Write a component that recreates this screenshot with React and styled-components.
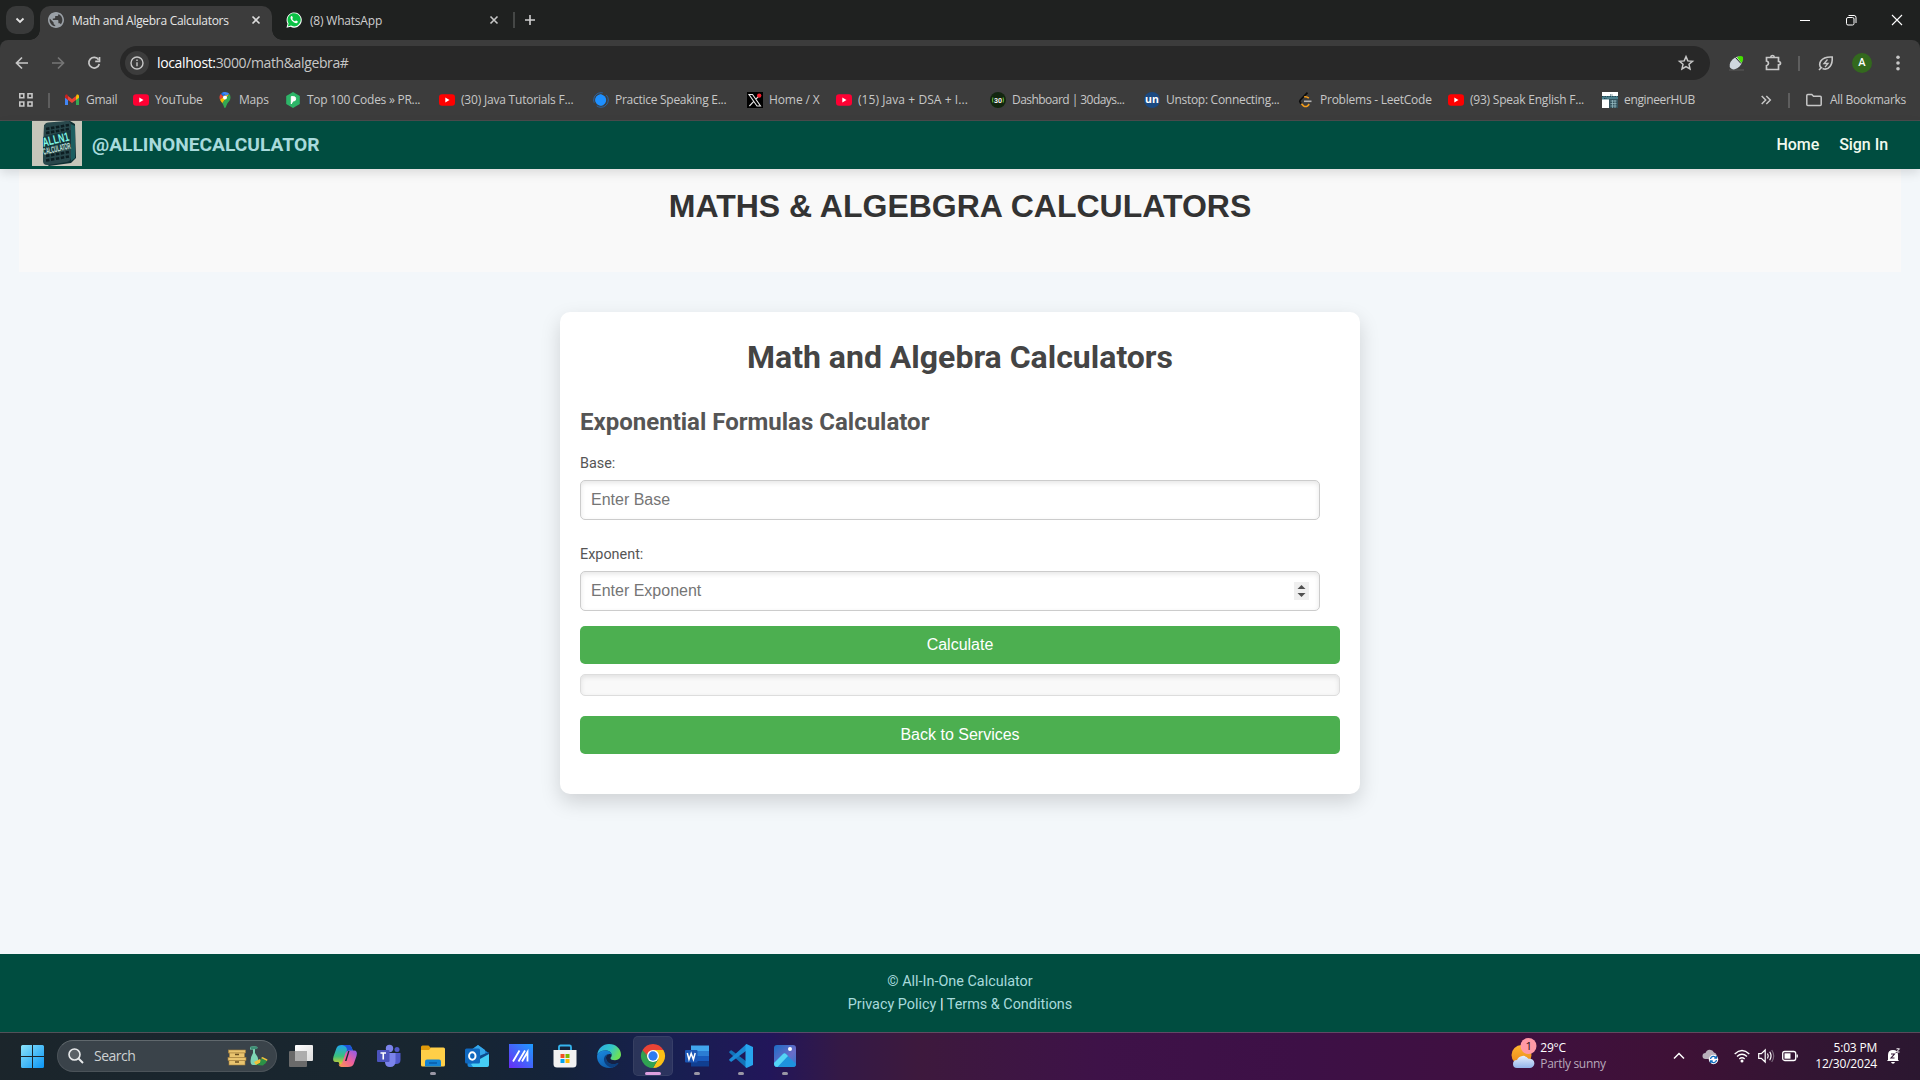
import React from "react";
import styled, { createGlobalStyle } from "styled-components";

const GlobalStyle = createGlobalStyle`
  * { box-sizing: border-box; }
  html, body { margin: 0; padding: 0; overflow: hidden; }
  body { width: 1920px; height: 1080px; background: #f3f7fa; }
  svg { display: block; flex: none; overflow: visible; }
`;

const ui = `"Open Sans", "Noto Sans", sans-serif`;

const Screen = styled.div`
  width: 1920px;
  height: 1080px;
  display: flex;
  flex-direction: column;
  overflow: hidden;
`;

/* ---------- browser chrome ---------- */

const TabStrip = styled.div`
  height: 40px;
  flex: none;
  background: #1f2120;
  display: flex;
  align-items: flex-start;
  padding: 6px 0 0 6px;
  font-family: ${ui};
`;

const TabSearch = styled.div`
  width: 28px;
  height: 28px;
  border-radius: 10px;
  background: #393a3a;
  display: grid;
  place-items: center;
  margin-right: 6px;
`;

const Tab = styled.div`
  position: relative;
  width: ${(p) => p.$w}px;
  height: 34px;
  padding: 0 0 6px ${(p) => p.$pad}px;
  display: flex;
  align-items: center;
  border-radius: 10px 10px 0 0;
  background: ${(p) => (p.$active ? "#3c3c3c" : "transparent")};
  color: ${(p) => (p.$active ? "#e6e6e6" : "#cfcfcf")};
  ${(p) =>
    p.$active &&
    `
    &::before, &::after {
      content: "";
      position: absolute;
      bottom: 0;
      width: 10px;
      height: 10px;
    }
    &::before { left: -10px; background: radial-gradient(circle at 0 0, transparent 9.5px, #3c3c3c 10px); }
    &::after { right: -10px; background: radial-gradient(circle at 100% 0, transparent 9.5px, #3c3c3c 10px); }
  `}
`;

const Label = styled.span`
  font-size: ${(p) => p.$size || 12}px;
  letter-spacing: ${(p) => p.$track || 0}px;
  line-height: 16px;
  white-space: nowrap;
`;

const TabTitle = styled(Label)`
  width: ${(p) => p.$w}px;
  margin-left: 8px;
  padding-top: 2px;
`;

const StripDivider = styled.div`
  width: 2px;
  height: 16px;
  margin: 6px 10px 0 3px;
  background: #454746;
`;

const NewTab = styled.div`
  padding-top: 9px;
`;

const WindowControls = styled.div`
  margin-left: auto;
  display: flex;
  padding: 8px 17px 0 0;
  gap: 34px;
`;

const Toolbar = styled.div`
  height: 46px;
  flex: none;
  background: #1f2120;
`;

const ToolbarInner = styled.div`
  height: 100%;
  display: flex;
  align-items: center;
  background: #3c3c3c;
  border-radius: 8px 8px 0 0;
  padding-left: 14px;
  font-family: ${ui};
`;

const NavIcon = styled.div`
  width: 16px;
  margin-right: 20px;
`;

const Omnibox = styled.div`
  width: 1590px;
  height: 34px;
  margin-left: -2px;
  border-radius: 17px;
  background: #282828;
  display: flex;
  align-items: center;
  padding: 0 16px 0 5px;
`;

const SiteInfo = styled.div`
  width: 24px;
  height: 24px;
  border-radius: 50%;
  background: #3c3c3c;
  display: grid;
  place-items: center;
  margin-right: 8px;
`;

const Url = styled.span`
  flex: 1;
  font-size: 14px;
  letter-spacing: ${(p) => p.$track}px;
  line-height: 20px;
  color: #c7c7c7;
  white-space: nowrap;
  b { font-weight: 400; color: #fff; }
`;

const Actions = styled.div`
  display: flex;
  align-items: center;
  margin-left: 18px;
`;

const ActionSlot = styled.div`
  width: ${(p) => p.$w}px;
  display: flex;
  align-items: center;
`;

const Bar = styled.div`
  width: 2px;
  height: 15px;
  background: #5e5e5e;
`;

const Avatar = styled.div`
  width: 20px;
  height: 20px;
  border-radius: 50%;
  background: #33691e;
  color: #fff;
  display: grid;
  place-items: center;
  font: 500 11px/20px Roboto, sans-serif;
`;

const BookmarkBar = styled.div`
  height: 35px;
  flex: none;
  background: #3c3c3c;
  border-bottom: 1px solid #4b4b4d;
  display: flex;
  align-items: center;
  padding: 0 14px 6px 18px;
  font-family: ${ui};
  color: #c7c7c7;
`;

const Bookmark = styled.div`
  width: ${(p) => p.$w}px;
  display: flex;
  align-items: center;
  gap: 6px;
`;

const BookmarkTail = styled.div`
  margin-left: auto;
  display: flex;
  align-items: center;
`;

/* ---------- site ---------- */

const SiteHeader = styled.header`
  position: relative;
  z-index: 1;
  height: 48px;
  flex: none;
  background: #004d40;
  box-shadow: 0 4px 10px rgba(0, 0, 0, 0.12);
  display: flex;
  align-items: center;
  padding: 0 32px;
  font-family: Roboto, sans-serif;
`;

const LogoBox = styled.div`
  height: 48px;
  margin-right: 10px;
`;

const Brand = styled.span`
  font-size: 19.2px;
  font-weight: 700;
  line-height: 24px;
  padding-bottom: 1px;
  color: #a8dadc;
`;

const SiteNav = styled.nav`
  margin-left: auto;
  display: flex;
  gap: 20px;
  padding-bottom: 2px;
  font-size: 16px;
  letter-spacing: -0.05px;
  font-weight: 500;
  color: #f1faee;
`;

const Main = styled.main`
  flex: 1;
  background: #f3f7fa;
  display: flex;
  flex-direction: column;
  align-items: center;
`;

const Banner = styled.section`
  width: 1882px;
  height: 103px;
  background: #f9f9f9;
  padding-top: 17px;
  text-align: center;
`;

const BannerTitle = styled.h1`
  margin: 0;
  font: 700 32px/40px "Liberation Sans", Arial, sans-serif;
  color: #333;
`;

const Card = styled.section`
  width: 800px;
  height: 482px;
  margin-top: 40px;
  padding: 26px 20px 0;
  background: #fff;
  border-radius: 10px;
  box-shadow: 0 8px 20px rgba(0, 0, 0, 0.15);
  font-family: Roboto, sans-serif;
`;

const CardTitle = styled.h1`
  margin: 0;
  font-size: 32px;
  line-height: 38px;
  text-align: center;
  color: #444;
`;

const CardSubtitle = styled.h2`
  margin: 32px 0 0;
  font-size: 24px;
  line-height: 28px;
  color: #555;
`;

const FieldLabel = styled.label`
  display: block;
  margin: ${(p) => p.$top}px 0 7px;
  font-size: 14.4px;
  line-height: 18px;
  color: #555;
`;

const Field = styled.div`
  width: 740px;
  height: 40px;
  border: 1px solid #ccc;
  border-radius: 5px;
  background: #fff;
  box-shadow: inset 0 2px 5px rgba(0, 0, 0, 0.1);
  display: flex;
  align-items: center;
  padding: 0 10px;
`;

const Input = styled.input`
  flex: 1;
  border: 0;
  padding: 0;
  margin: 0;
  outline: 0;
  background: transparent;
  font: 16px/18px "Liberation Sans", Arial, sans-serif;
  &::placeholder { color: #757575; opacity: 1; }
`;

const Spinner = styled.div`
  width: 15px;
  height: 18px;
  background: #efefef;
`;

const GreenButton = styled.button`
  display: block;
  width: 100%;
  height: 38px;
  margin: ${(p) => p.$top}px 0 0;
  border: 0;
  border-radius: 5px;
  background: #4caf50;
  color: #fff;
  font: 16px/18px "Liberation Sans", Arial, sans-serif;
`;

const ResultBox = styled.div`
  height: 22px;
  margin-top: 10px;
  border: 1px solid #ddd;
  border-radius: 5px;
  background: #f9f9f9;
  box-shadow: inset 0 2px 5px rgba(0, 0, 0, 0.1);
`;

const SiteFooter = styled.footer`
  height: 78px;
  flex: none;
  background: #004d40;
  padding-top: 16px;
  text-align: center;
  font: 14.4px/23px Roboto, sans-serif;
  color: #fff;
  span { color: #a8dadc; }
`;

/* ---------- taskbar ---------- */

const TaskBar = styled.div`
  height: 48px;
  flex: none;
  border-top: 1px solid rgba(128, 118, 128, 0.55);
  background: linear-gradient(
    90deg,
    #1b252b 0, #182630 420px, #14233a 560px, #171f50 670px,
    #22165a 770px, #341946 840px, #3d193d 920px, #3e1248 1100px, #3d1046 1300px,
    #3f1040 1500px, #3e1136 1680px, #331533 1800px, #2b1730 1920px
  );
  display: flex;
  align-items: center;
  padding: 0 20px 1px 21px;
  font-family: ${ui};
`;

const StartSlot = styled.div`
  width: 36px;
`;

const SearchPill = styled.div`
  width: 220px;
  height: 32px;
  border-radius: 16px;
  background: #3a434a;
  border: 1px solid #4b5359;
  border-top-color: #60686d;
  display: flex;
  align-items: center;
  padding: 0 8px 0 10px;
  color: #cdd1d3;
`;

const SearchText = styled(Label)`
  flex: 1;
  margin-left: 10px;
`;

const Apps = styled.div`
  display: flex;
  margin-left: 4px;
  gap: 4px;
`;

const AppSlot = styled.div`
  width: 40px;
  height: 40px;
  border-radius: 5px;
  display: flex;
  flex-direction: column;
  align-items: center;
  padding-top: 8px;
  background: ${(p) => (p.$active ? "rgba(255,255,255,0.09)" : "transparent")};
  box-shadow: ${(p) => (p.$active ? "inset 0 0 0 1px rgba(255,255,255,0.06)" : "none")};
`;

const RunMark = styled.div`
  width: ${(p) => (p.$active ? 16 : 6)}px;
  height: 3px;
  margin-top: 4px;
  border-radius: 2px;
  background: ${(p) => (p.$active ? "#de9fe0" : "#9a97a5")};
`;

const Weather = styled.div`
  margin-left: auto;
  width: 162px;
  display: flex;
  align-items: center;
  gap: 3px;
`;

const WeatherIcon = styled.div`
  padding-bottom: 5px;
`;

const Lines = styled.div`
  display: flex;
  flex-direction: column;
  align-items: ${(p) => p.$align || "flex-start"};
  color: #fff;
`;

const Dim = styled(Label)`
  color: #b9a9bb;
`;

const Tray = styled.div`
  display: flex;
  align-items: center;
`;

const TraySlot = styled.div`
  width: ${(p) => p.$w}px;
`;

/* ---------- icons ---------- */

const Svg = ({ w = 16, h, vb, children, ...r }) => (
  <svg width={w} height={h || w} viewBox={vb || `0 0 ${w} ${h || w}`} fill="none" {...r}>
    {children}
  </svg>
);

const Close = ({ c = "#dcdcdc" }) => (
  <Svg w={8} stroke={c} strokeWidth="1.6"><path d="M.5.5l7 7M7.5.5l-7 7" /></Svg>
);

const Globe = () => (
  <Svg w={16} vb="2 2 20 20">
    <path fill="#9aa0a6" d="M12 2C6.480 2 2 6.480 2 12s4.480 10 10 10 10-4.480 10-10S17.520 2 12 2zm-1 17.930c-3.950-.49-7-3.850-7-7.930 0-.62.08-1.210.21-1.790L9 15v1c0 1.100.9 2 2 2v1.930zm6.900-2.540c-.26-.81-1-1.390-1.900-1.390h-1v-3c0-.55-.45-1-1-1H8v-2h2c.55 0 1-.45 1-1V7h2c1.100 0 2-.9 2-2v-.41c2.930 1.190 5 4.060 5 7.410 0 2.080-.8 3.970-2.100 5.390z" />
  </Svg>
);

const WhatsApp = () => (
  <Svg>
    <path d="M.5 15.700l1-4A7.600 7.600 0 1 1 4.500 14.700z" fill="#fff" />
    <path d="M1.800 14.400l.8-3A6.600 6.600 0 1 1 5 13.600z" fill="#0bc144" />
    <path d="M5.200 4.300c-1.500 1.300-.2 3.700 1.600 5.300 1.800 1.500 4.100 2.400 4.900.6.2-.6 0-.8-.5-1.100l-1.200-.6c-.4-.1-.8 1-1.300.8C7.500 8.800 6.500 7.700 6.300 7c-.1-.4.7-.7.5-1.200l-.5-1.300c-.2-.5-.8-.5-1.100-.2z" fill="#fff" />
  </Svg>
);

const Gmail = () => (
  <Svg>
    <path d="M1 4v9h3V7.500z" fill="#4285f4" />
    <path d="M12 7.500V13h3V4z" fill="#34a853" />
    <path d="M12 4.500V8l3-2.300V4c0-1.300-1.500-2-2.500-1.200z" fill="#fbbc04" />
    <path d="M4 4.500V8L1 5.700V4c0-1.300 1.500-2 2.500-1.200z" fill="#c5221f" />
    <path d="M4 4v4l4 3 4-3V4L8 7z" fill="#ea4335" />
  </Svg>
);

const YouTube = ({ c = "#ff0033" }) => (
  <Svg><rect y="2.200" width="16" height="11.600" rx="3" fill={c} /><path d="M6.300 5.600v4.800L10.500 8z" fill="#fff" /></Svg>
);

const MapsPin = () => (
  <Svg>
    <path d="M8 0a5.500 5.500 0 0 0-4.200 2L7 5z" fill="#1a73e8" />
    <path d="M3.800 2A5.500 5.500 0 0 0 3 7.800L6.300 4.400z" fill="#ea4335" />
    <path d="M8 0c-1 0-2 .3-2.800.8L9.700 4l2.600-2.200A5.500 5.500 0 0 0 8 0z" fill="#4285f4" />
    <path d="M3 7.800c.5 1.200 1.500 2 2.300 3.400l7-8.900-5.600 2.200z" fill="#fbbc04" />
    <path d="M5.300 11.200C6.700 13 7 16 8 16s1.300-3 2.700-5c1.400-1.800 2.800-3 2.800-5.500 0-1.400-.4-2.600-1.200-3.500z" fill="#34a853" />
    <circle cx="8" cy="5.400" r="2" fill="#fff" />
  </Svg>
);

const PrepHex = () => (
  <Svg>
    <path d="M8 0l6.800 4v8L8 16l-6.800-4V4z" fill="#2db568" />
    <path d="M6.300 12V4.600h2.200a2.100 2.100 0 0 1 0 4.400H7.800L6.300 12z" fill="#fff" stroke="#fff" strokeWidth="1" />
  </Svg>
);

const Swirl = () => (
  <Svg>
    <circle cx="8" cy="8" r="7.300" stroke="#2a62a0" strokeWidth="1" strokeDasharray="16 4" />
    <path d="M8 2.200A5.800 5.800 0 1 0 13.800 8c0 3-2 4.600-4 4.800C14 11 13 5 8 2.200z" fill="#1e90ff" />
    <circle cx="7.800" cy="8" r="5.400" fill="#1e90ff" />
  </Svg>
);

const XLogo = () => (
  <Svg>
    <rect width="16" height="16" fill="#000" />
    <path d="M2 2.500h3.500L13.500 14H10zM13 3L8.600 7.400M7 9.200L2.400 14" stroke="#e8e8e8" strokeWidth="1.100" />
    <circle cx="12.200" cy="3.600" r="2.200" fill="#f4212e" />
  </Svg>
);

const Thirty = () => (
  <Svg>
    <circle cx="8" cy="8" r="8" fill="#12260f" />
    <text x="8" y="10.500" textAnchor="middle" fontFamily="Roboto, sans-serif" fontWeight="700" fontSize="7" fill="#f2f2f2">30</text>
    <path d="M3 5.500Q1.800 8 3 10.500M13 5.500Q14.200 8 13 10.500" stroke="#5aa832" strokeWidth="1.200" />
  </Svg>
);

const Unstop = () => (
  <Svg>
    <circle cx="8" cy="8" r="8" fill="#1c4980" />
    <text x="8" y="11" textAnchor="middle" fontFamily="Open Sans, sans-serif" fontWeight="700" fontSize="10.500" fill="#fff">un</text>
  </Svg>
);

const LeetCode = () => (
  <Svg>
    <path d="M9.500.6L2.300 8q-1.100 1.300 0 2.600l1 1" stroke="#0c0c0c" strokeWidth="1.700" />
    <path d="M6.200 5Q8.300 4 10.800 6.200M3.500 11.800l2 2q2 1.500 4.100 0l1.700-1.700" stroke="#f89f1b" strokeWidth="1.600" />
    <path d="M6 9.300h7.500" stroke="#b3b3b3" strokeWidth="1.600" />
  </Svg>
);

const HubIcon = () => (
  <Svg>
    <rect width="16" height="16" fill="#fff" />
    <path d="M0 4h16v3.500H0z" fill="#4c7f8c" />
    <path d="M7 7h9v9H7z" fill="#35545f" />
    <path d="M8.500 9h6M8.500 11.500h6M8.500 14h6M10.500 8v8M13 8v8" stroke="#9cc1c9" strokeWidth=".7" />
    <path d="M0 4.500h16M2 6.500h3M8 3h3" stroke="#1f4b57" strokeDasharray="1.500 1" />
  </Svg>
);

const BrandLogo = () => (
  <Svg w={50} h={45}>
    <rect width="50" height="45" fill="#c6c6ba" />
    <path d="M12 4L38 0l5 3 1 34-5 5-22 3-6-5z" fill="#0f2f33" />
    <path d="M12 6q0-4 4-4.500L34 0q5-.3 5 4v32q0 4-4 5l-19 3q-5 .5-5-4z" fill="#29484c" />
    <path d="M39 3l4 2v32l-4 3z" fill="#1c5e60" />
    <g stroke="#0d1e22" strokeWidth="2.600" strokeDasharray="3.500 1.500">
      <path d="M14 8l23-4M14 12l23-4M14 35l23-4M14 39.500l23-4" />
    </g>
    <path d="M11 16l28-7v16l-28 8z" fill="#16363b" />
    <g fontFamily="Liberation Sans, sans-serif" fontWeight="700" transform="rotate(-13 25 22)">
      <text x="11" y="22.500" fontSize="12.500" textLength="27" lengthAdjust="spacingAndGlyphs" fill="#7ff5e4">ALLN1</text>
      <text x="9.500" y="30.500" fontSize="9" textLength="28" lengthAdjust="spacingAndGlyphs" fill="#c4e2dd">CALCULATOR</text>
    </g>
  </Svg>
);

const Win = () => (
  <Svg w={23}>
    <defs>
      <linearGradient id="win" x1="0" y1="0" x2="23" y2="23" gradientUnits="userSpaceOnUse">
        <stop stopColor="#8be4fb" /><stop offset="1" stopColor="#0a95f5" />
      </linearGradient>
    </defs>
    <path d="M0 1.500Q0 0 1.500 0H11v11H0zM12 0h9.500Q23 0 23 1.500V11H12zM0 12h11v11H1.500Q0 23 0 21.500zM12 12h11v9.500q0 1.500-1.500 1.500H12z" fill="url(#win)" />
  </Svg>
);

const SearchArt = () => (
  <Svg w={40} h={20}>
    <g fill="#e9c46f" stroke="#a8823c" strokeWidth=".6">
      <rect x=".5" y="4" width="17" height="3" /><rect x="1.500" y="7" width="15" height="4.500" />
      <rect y="11.500" width="18" height="3" /><rect x="1" y="14.500" width="16" height="4.500" />
    </g>
    <path d="M7 8.500h4M7 16h4" stroke="#6b4f20" strokeWidth="1.500" />
    <path d="M22 1q4-1.500 7.500 0l-.5 2h-2v4q3.500 4 3.500 8t-3.500 4h-2q-2.500 0-2.500-4t2.500-8V3.500h-3z" fill="#7fd4b4" />
    <path d="M22 1q4-1.500 7.500 0l-.5 2-6 .5z" fill="#3f8f76" />
    <path d="M26 16l6-3 2 3-6 3z" fill="#f0c23b" /><path d="M33 12l6 3-2 3-5-1z" fill="#2c9146" /><path d="M33 12l6 3 .5-1.500-5-2.500z" fill="#f0c23b" />
    <path d="M28 19l6-3 3 1.500-2 2z" fill="#2c9146" />
  </Svg>
);

const TaskView = () => (
  <Svg w={24}>
    <defs><linearGradient id="tv" x1="0" y1="0" x2="1" y2="1"><stop stopColor="#fff" /><stop offset="1" stopColor="#dcdcdc" /></linearGradient></defs>
    <rect x="6" y="1" width="18" height="16" rx="1" fill="url(#tv)" />
    <rect x="0" y="7" width="18" height="16" rx="1" fill="#6a6a6a" />
    <rect x="6" y="7" width="12" height="10" fill="#adadad" />
  </Svg>
);

const Copilot = () => (
  <Svg w={24}>
    <defs>
      <linearGradient id="cpA" x1="0" y1="0" x2="0" y2="1"><stop stopColor="#1fa4ee" /><stop offset=".55" stopColor="#3cc07c" /><stop offset="1" stopColor="#f4d11f" /></linearGradient>
      <linearGradient id="cpB" x1="1" y1="0" x2="0" y2="1"><stop stopColor="#8a5cf0" /><stop offset=".5" stopColor="#f0609c" /><stop offset="1" stopColor="#fb9a4b" /></linearGradient>
    </defs>
    <path d="M9 1h7q2 0 2.700 2.500L20 7h-4q-2 0-2.700 2L10.500 18Q9.500 21.500 7 21.500L5.500 18H3Q-1 18 .5 12.500L3.500 4Q4.500 1 9 1z" fill="url(#cpA)" />
    <path d="M9 1h7q2 0 2.700 2.500L20 7h-4q-2 0-2.700 2l.7-3Q14 2 9 1z" fill="#1f52d8" />
    <path d="M15 23H8.500q-2 0-3-2.500 3 .5 4-2.500l3-9q1-2.500 3.500-2.500h5q4 0 2.500 5.500l-2.800 8Q19.700 23 15 23z" fill="url(#cpB)" />
    <path d="M12 17l3.200-10h1.300l-3 10z" fill="#16242e" />
  </Svg>
);

const Teams = () => (
  <Svg w={24}>
    <circle cx="12.500" cy="4.500" r="3.700" fill="#7b83eb" /><circle cx="20" cy="5.500" r="2.500" fill="#5059c9" />
    <path d="M17 9h6.500v7q0 4-4.500 4h-2z" fill="#5059c9" />
    <path d="M8 9h10.500v8q0 6-5.500 6-5 0-5-5z" fill="#7b83eb" />
    <rect y="6" width="12.500" height="12" rx="1" fill="#4b53bc" />
    <path d="M3.500 9h5.500M6.250 9v6.500" stroke="#fff" strokeWidth="1.600" />
  </Svg>
);

const Explorer = () => (
  <Svg w={24}>
    <path d="M0 3q0-1.500 1.500-1.500h6L10 4v4H0z" fill="#e09a0a" />
    <path d="M0 6h8l2-2.500h12.500Q24 3.500 24 5v16q0 1.500-1.500 1.500h-21Q0 22.500 0 21z" fill="#ffcf48" />
    <path d="M4 22.500v-5q0-2 2-2h12q2 0 2 2v5z" fill="#1283d4" /><path d="M8 19h8" stroke="#0a5ba8" strokeWidth="1.500" />
  </Svg>
);

const Outlook = () => (
  <Svg w={24}>
    <path d="M2.500 9L13 1l10.500 8v12q0 2-2 2h-17q-2 0-2-2z" fill="#1a86d9" />
    <path d="M6 6l7-5 7 5v8H6z" fill="#35a7ea" />
    <path d="M14 12l10-4v6l-8 4z" fill="#0e4a8c" />
    <path d="M6 20l18-10v11q0 2-2 2H8z" fill="#45cdf5" />
    <rect y="4.500" width="15" height="15" rx="1.500" fill="#1068bf" />
    <ellipse cx="7.300" cy="12" rx="3.200" ry="3.700" stroke="#fff" strokeWidth="2" />
  </Svg>
);

const MyAsus = () => (
  <Svg w={24}>
    <defs><linearGradient id="ma" x1="0" y1="1" x2="1" y2="0"><stop stopColor="#6a2cf5" /><stop offset="1" stopColor="#1c9dff" /></linearGradient></defs>
    <rect width="24" height="24" fill="url(#ma)" />
    <path d="M4 17.500L10.500 6.500M9.500 17.500L16 6.500M13 17.500L18.500 8v9.500" stroke="#fff" strokeWidth="1.800" />
  </Svg>
);

const Store = () => (
  <Svg w={24}>
    <path d="M6 6V3q0-1.500 1.500-1.500h9Q18 1.500 18 3v3" stroke="#35b4ee" strokeWidth="1.800" />
    <path d="M.5 6h23v14q0 3.500-3.500 3.500H4Q.5 23.500.5 20z" fill="#f2f2f2" />
    <path d="M7.500 10h4v4h-4z" fill="#f25022" /><path d="M12.500 10h4v4h-4z" fill="#7fba00" />
    <path d="M7.500 15h4v4h-4z" fill="#00a4ef" /><path d="M12.500 15h4v4h-4z" fill="#ffb900" />
  </Svg>
);

const Edge = () => (
  <Svg w={24}>
    <defs>
      <linearGradient id="edA" x1="0" y1="0" x2="1" y2=".4"><stop stopColor="#2aa7e8" /><stop offset=".6" stopColor="#33c6c8" /><stop offset="1" stopColor="#6be05a" /></linearGradient>
      <linearGradient id="edB" x1="0" y1="0" x2=".6" y2="1"><stop stopColor="#1a8ae0" /><stop offset="1" stopColor="#0f5ba8" /></linearGradient>
    </defs>
    <path d="M.3 10.500C1 4.500 6 0 12 0c7 0 12 5 12 10.500 0 3.500-2.700 5.700-6 5.700-3 0-4.500-1-4.500-2s1.200-1.500 1.200-3.300C14.700 8.500 12 6.500 8.500 6.500c-4 0-7 2-8.200 4z" fill="url(#edA)" />
    <path d="M.1 11.500C1 8 4.500 6.500 8.500 6.500c3.500 0 6 1.800 6.200 4-1-1-5.700-1-5.700 3.500 0 5 6 8 12.500 5C19.500 22 16 24 12 24 5 24-.5 18.500.1 11.500z" fill="url(#edB)" />
    <path d="M9 14c0 5 6 8 12.700 4.700-1.500 2.500-4 4.300-7 5C9.500 22.500 6.500 18 7 14.500c.4-3 3.500-5.500 7.700-4.200C13 9.500 9 10.500 9 14z" fill="#0d3f7d" />
  </Svg>
);

const Chrome = () => (
  <Svg w={24} vb="0 0 48 48">
    <path d="M24 12h20.800A24 24 0 0 1 24 48l10.400-18z" fill="#fbc116" />
    <path d="M3.200 12a24 24 0 0 0 20.800 36l10.400-18L13.600 30z" fill="#30a352" />
    <path d="M3.200 12A24 24 0 0 1 24 0a24 24 0 0 1 20.800 12H24L13.600 30z" fill="#ea4335" />
    <path d="M3.200 12l10.400 18a12 12 0 0 0 10.400 6z" fill="#30a352" />
    <circle cx="24" cy="24" r="12" fill="#fff" /><circle cx="24" cy="24" r="9.300" fill="#2f7af0" />
  </Svg>
);

const Word = () => (
  <Svg w={24}>
    <path d="M6 1.500h18V7H6z" fill="#41a5ee" /><path d="M6 7h18v5H6z" fill="#2b7cd3" />
    <path d="M6 12h18v5.500H6z" fill="#185abd" /><path d="M6 17.500h18v5H6z" fill="#103f91" />
    <rect y="6" width="12.500" height="12.500" rx="1" fill="#1b56b5" />
    <path d="M2.300 9l1.700 6.500 2.200-6 2.200 6L10.200 9" stroke="#fff" strokeWidth="1.500" />
  </Svg>
);

const VSCode = () => (
  <Svg w={24}>
    <path d="M17.500 24L.4 8.800q-.6-.6 0-1.200l1.200-1.100q.6-.4 1.200 0L17.500 17.500z" fill="#1272b8" />
    <path d="M17.500 0L.4 15.200q-.6.600 0 1.200l1.200 1.100q.6.400 1.200 0L17.500 6.500z" fill="#1b8ad6" />
    <path d="M17.500 0L24 3v18l-6.500 3-1-1V1z" fill="#27a5ee" />
  </Svg>
);

const Photos = () => (
  <Svg w={24}>
    <defs><linearGradient id="ph" x1="0" y1="0" x2="1" y2="1"><stop stopColor="#1b6cc4" /><stop offset=".6" stopColor="#6a6cc9" /><stop offset="1" stopColor="#2b7bd0" /></linearGradient></defs>
    <rect x="1" y="1" width="22" height="22" rx="3" fill="url(#ph)" />
    <path d="M1 19l9-9q1.500-1.500 3 0l10 10q0 3-3 3H4q-3 0-3-4z" fill="#1e93dd" />
    <path d="M1 19l9-9q1.500-1.500 3 0l2 2L4.500 23Q1 23 1 19z" fill="#55d4f5" />
    <circle cx="17" cy="5" r="2" fill="#fff" />
  </Svg>
);

const SunCloud = () => (
  <Svg w={26} h={32}>
    <defs><linearGradient id="sun" x1="0" y1="0" x2="0" y2="1"><stop stopColor="#ffb52e" /><stop offset="1" stopColor="#e8851a" /></linearGradient>
      <linearGradient id="cl" x1="0" y1="0" x2="0" y2="1"><stop stopColor="#e6effd" /><stop offset="1" stopColor="#92b4ea" /></linearGradient></defs>
    <circle cx="10.500" cy="17" r="10" fill="url(#sun)" />
    <path d="M6 30a4 4 0 0 1 0-8 6.500 6.500 0 0 1 11.500-1.200A4.700 4.700 0 1 1 18 30z" fill="url(#cl)" />
    <circle cx="17.500" cy="8" r="8" fill="#ff99a5" />
    <text x="17.700" y="12.200" textAnchor="middle" fontFamily="Open Sans, sans-serif" fontSize="11.500" fill="#2b1115">1</text>
  </Svg>
);

const bookmarks = [
  [<Gmail />, "Gmail", 69, -0.25],
  [<YouTube />, "YouTube", 84, -0.27],
  [<MapsPin />, "Maps", 68, -0.2],
  [<PrepHex />, "Top 100 Codes » PR...", 154, -0.27],
  [<YouTube c="#ff0000" />, "(30) Java Tutorials F...", 154, -0.2],
  [<Swirl />, "Practice Speaking E...", 154, -0.27],
  [<XLogo />, "Home / X", 89, -0.1],
  [<YouTube />, "(15) Java + DSA + I...", 154, 0.07],
  [<Thirty />, "Dashboard | 30days...", 154, -0.54],
  [<Unstop />, "Unstop: Connecting...", 154, -0.29],
  [<LeetCode />, "Problems - LeetCode", 150, -0.24],
  [<YouTube c="#ff0000" />, "(93) Speak English F...", 154, -0.22],
  [<HubIcon />, "engineerHUB", 120, -0.36],
];

const apps = [
  [<TaskView />, 0], [<Copilot />, 0], [<Teams />, 0], [<Explorer />, 1], [<Outlook />, 0], [<MyAsus />, 0],
  [<Store />, 0], [<Edge />, 0], [<Chrome />, 2], [<Word />, 1], [<VSCode />, 1], [<Photos />, 1],
];

export default function App() {
  return (
    <Screen>
      <GlobalStyle />
      <TabStrip>
        <TabSearch>
          <Svg w={10} stroke="#e3e3e3" strokeWidth="1.800"><path d="M1.500 3.500L5 7l3.500-3.500" /></Svg>
        </TabSearch>
        <Tab $active $w={232} $pad={8}>
          <Globe />
          <TabTitle $w={180} $track={-0.29}>Math and Algebra Calculators</TabTitle>
          <Close />
        </Tab>
        <Tab $w={238} $pad={14}>
          <WhatsApp />
          <TabTitle $w={180} $track={-0.2}>(8) WhatsApp</TabTitle>
          <Close c="#c7c7c7" />
        </Tab>
        <StripDivider />
        <NewTab><Svg w={10} stroke="#d0d0d0" strokeWidth="1.600"><path d="M5 0v10M0 5h10" /></Svg></NewTab>
        <WindowControls>
          <Svg w={12} stroke="#fff"><path d="M1 6.500h10" /></Svg>
          <Svg w={12} stroke="#fff"><rect x="1.500" y="3.500" width="7.500" height="7.500" rx="1.500" /><path d="M3.500 1.500H9q2 0 2 2V9" /></Svg>
          <Svg w={12} stroke="#fff" strokeWidth="1.100"><path d="M1 1l10 10M11 1L1 11" /></Svg>
        </WindowControls>
      </TabStrip>

      <Toolbar>
        <ToolbarInner>
          <NavIcon><Svg stroke="#c7c7c7" strokeWidth="1.700"><path d="M14 8H3M8 2.500L2.500 8 8 13.500" /></Svg></NavIcon>
          <NavIcon><Svg stroke="#757575" strokeWidth="1.700"><path d="M2 8h11M8 2.500L13.500 8 8 13.500" /></Svg></NavIcon>
          <NavIcon><Svg stroke="#c7c7c7" strokeWidth="1.700"><path d="M12.600 4.800A5.300 5.300 0 1 0 13.300 9" /><path d="M13.500 2v4.300H9.200" /></Svg></NavIcon>
          <Omnibox>
            <SiteInfo>
              <Svg w={14} stroke="#c7c7c7" strokeWidth="1.400"><circle cx="7" cy="7" r="6" /><path d="M7 6.200v4M7 3.600v1.500" /></Svg>
            </SiteInfo>
            <Url $track={-0.37}><b>localhost:</b>3000/math&amp;algebra#</Url>
            <Svg stroke="#c7c7c7" strokeWidth="1.500"><path d="M8 1.600l1.800 4.300 4.700.4-3.500 3 1 4.600L8 11.500l-4 2.400 1-4.600-3.500-3 4.700-.4z" /></Svg>
          </Omnibox>
          <Actions>
            <ActionSlot $w={37}>
              <Svg>
                <path d="M1 15h15" stroke="#5a5a5a" />
                <ellipse cx="8" cy="8" rx="5" ry="7.500" transform="rotate(45 8 8)" fill="#cfd6de" />
                <path d="M9 2.500q4-2.500 6-.5 1 3-1.500 6z" fill="#44e000" /><path d="M7.500 2.500l5.500 6" stroke="#222" />
              </Svg>
            </ActionSlot>
            <ActionSlot $w={33}>
              <Svg stroke="#c7c7c7" strokeWidth="1.700"><path d="M1.500 2.500h12v4q2 .2 2 1.700t-2 1.600v4.700h-12v-3.800q2-.6 2-2.400t-2-2.300z" /><path d="M5.800 2q.2-1.500 1.700-1.500T9.200 2" /></Svg>
            </ActionSlot>
            <ActionSlot $w={20}><Bar /></ActionSlot>
            <ActionSlot $w={34}>
              <Svg stroke="#c7c7c7" strokeWidth="1.600"><path d="M3 13Q.5 9.500 2.800 6 6 1.500 14.200 2q.4 6-2 9.200Q9 15.500 4.500 13.500M1 15l3-3" /><path d="M9.500 4.500L6 8.500h4l-3 3.700" strokeWidth="1.300" /></Svg>
            </ActionSlot>
            <ActionSlot $w={44}><Avatar>A</Avatar></ActionSlot>
            <Svg w={4} h={16}><circle cx="2" cy="2.300" r="1.800" fill="#c7c7c7" /><circle cx="2" cy="8" r="1.800" fill="#c7c7c7" /><circle cx="2" cy="13.700" r="1.800" fill="#c7c7c7" /></Svg>
          </Actions>
        </ToolbarInner>
      </Toolbar>

      <BookmarkBar>
        <ActionSlot $w={30}>
          <Svg stroke="#c7c7c7" strokeWidth="1.600"><path d="M1.800 1.800h4v4h-4zM10 1.800h4v4h-4zM1.800 10h4v4h-4zM10 10h4v4h-4z" /></Svg>
        </ActionSlot>
        <ActionSlot $w={16}><Bar /></ActionSlot>
        {bookmarks.map(([icon, text, w, track], i) => (
          <Bookmark key={i} $w={w}>{icon}<Label $track={track}>{text}</Label></Bookmark>
        ))}
        <BookmarkTail>
          <ActionSlot $w={27}><Svg w={10} stroke="#c7c7c7" strokeWidth="1.500"><path d="M.7 1l4 4-4 4M5.300 1l4 4-4 4" /></Svg></ActionSlot>
          <ActionSlot $w={18}><Bar /></ActionSlot>
          <ActionSlot $w={24}><Svg stroke="#c7c7c7" strokeWidth="1.500"><path d="M.8 3.500q0-1 1-1h4l1.700 1.700h6.700q1 0 1 1v7.300q0 1-1 1H1.800q-1 0-1-1z" /></Svg></ActionSlot>
          <Label $track={-0.3}>All Bookmarks</Label>
        </BookmarkTail>
      </BookmarkBar>

      <SiteHeader>
        <LogoBox><BrandLogo /></LogoBox>
        <Brand>@ALLINONECALCULATOR</Brand>
        <SiteNav><span>Home</span><span>Sign In</span></SiteNav>
      </SiteHeader>

      <Main>
        <Banner><BannerTitle>MATHS &amp; ALGEBGRA CALCULATORS</BannerTitle></Banner>
        <Card>
          <CardTitle>Math and Algebra Calculators</CardTitle>
          <CardSubtitle>Exponential Formulas Calculator</CardSubtitle>
          <FieldLabel $top={19}>Base:</FieldLabel>
          <Field><Input placeholder="Enter Base" /></Field>
          <FieldLabel $top={26}>Exponent:</FieldLabel>
          <Field>
            <Input placeholder="Enter Exponent" />
            <Spinner><Svg w={15} h={18}><path d="M3.500 7L7.500 3l4 4zM3.500 11l4 4 4-4z" fill="#505050" /></Svg></Spinner>
          </Field>
          <GreenButton $top={15}>Calculate</GreenButton>
          <ResultBox />
          <GreenButton $top={20}>Back to Services</GreenButton>
        </Card>
      </Main>

      <SiteFooter>
        <div><span>© All-In-One Calculator</span></div>
        <div><span>Privacy Policy</span> | <span>Terms &amp; Conditions</span></div>
      </SiteFooter>

      <TaskBar>
        <StartSlot><Win /></StartSlot>
        <SearchPill>
          <Svg stroke="#e8eaeb" strokeWidth="1.600"><circle cx="6.500" cy="6.500" r="5.500" fill="#5b6267" /><path d="M10.500 10.500L15 15" strokeWidth="2" /></Svg>
          <SearchText $size={14} $track={-0.5}>Search</SearchText>
          <SearchArt />
        </SearchPill>
        <Apps>
          {apps.map(([icon, state], i) => (
            <AppSlot key={i} $active={state === 2}>
              {icon}
              {state > 0 && <RunMark $active={state === 2} />}
            </AppSlot>
          ))}
        </Apps>
        <Weather>
          <WeatherIcon><SunCloud /></WeatherIcon>
          <Lines><Label $track={-0.2}>29°C</Label><Dim $track={-0.3}>Partly sunny</Dim></Lines>
        </Weather>
        <Tray>
          <TraySlot $w={29}><Svg w={12} stroke="#fff" strokeWidth="1.500"><path d="M1 8.500l5-5 5 5" /></Svg></TraySlot>
          <TraySlot $w={32}>
            <Svg>
              <path d="M3.500 11a3 3 0 0 1 0-6 4.500 4.500 0 0 1 8.500-.5 3.500 3.500 0 0 1 1 6.500z" fill="#b9b1bb" />
              <circle cx="11.500" cy="11.500" r="4.700" fill="#fff" />
              <path d="M8.500 11a3 3 0 0 1 5.500-1.200M14.500 12a3 3 0 0 1-5.500 1.200M14.500 8v2.200h-2.200M8.500 15v-2.200h2.200" stroke="#0f6cbd" strokeWidth="1.300" />
            </Svg>
          </TraySlot>
          <TraySlot $w={24}>
            <Svg stroke="#fff" strokeWidth="1.400"><path d="M.7 6Q8-.8 15.300 6M3 8.500q5-4.500 10 0M5.300 11q2.700-2.300 5.400 0" /><circle cx="8" cy="13" r="1.500" fill="#fff" stroke="none" /></Svg>
          </TraySlot>
          <TraySlot $w={24}>
            <Svg stroke="#fff" strokeWidth="1.200"><path d="M.7 5.700h2.600L7.200 2v12L3.300 10.300H.7zM9.500 5.500q1.500 2.500 0 5M11.700 3.800q2.700 4.200 0 8.400" /><path d="M13.700 2q4 6 0 12" stroke="#7b6a7c" /></Svg>
          </TraySlot>
          <TraySlot $w={33}>
            <Svg stroke="#fff" strokeWidth="1.300"><rect x=".7" y="3.500" width="13" height="9" rx="2" /><rect x="2.500" y="5.300" width="6" height="5.400" fill="#fff" stroke="none" /><path d="M15.200 6.500v3" /></Svg>
          </TraySlot>
          <Lines $align="flex-end"><Label $track={-0.2}>5:03 PM</Label><Label $track={-0.2}>12/30/2024</Label></Lines>
          <TraySlot $w={9} />
          <Svg w={14} h={16}>
            <path d="M2 12V7q0-5 5-5t5 5v5l1.200 1H.8zM5 14h4q-.5 1.800-2 1.800T5 14z" fill="#fff" />
            <path d="M5 6h3.500L5 10h3.500M10.500 1h3l-3 3.500h3" stroke="#321634" strokeWidth="1.100" />
            <path d="M10.500.8h3l-3 3.200h3" stroke="#fff" strokeWidth="1" />
          </Svg>
        </Tray>
      </TaskBar>
    </Screen>
  );
}
